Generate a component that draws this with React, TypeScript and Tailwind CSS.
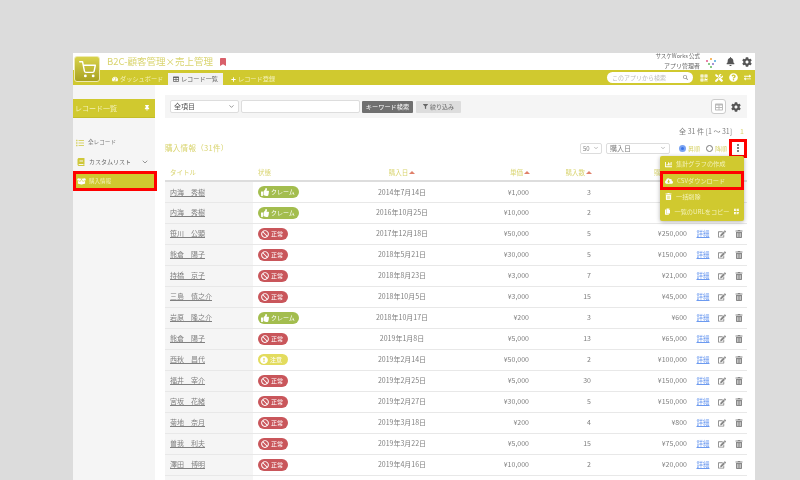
import {
  FaBan,
  FaBell,
  FaBook,
  FaBookmark,
  FaBoxOpen,
  FaChartBar,
  FaCloudDownloadAlt,
  FaCog,
  FaCopy,
  FaEdit,
  FaExchangeAlt,
  FaExclamationCircle,
  FaFilter,
  FaList,
  FaPlus,
  FaQrcode,
  FaQuestionCircle,
  FaSearch,
  FaTable,
  FaTachometerAlt,
  FaThumbsUp,
  FaThumbtack,
  FaTools,
  FaTrashAlt,
} from "react-icons/fa";
import { FiChevronDown, FiShoppingCart } from "react-icons/fi";

type Status = "claim" | "ok" | "warn";

const rows: { name: string; status: Status; date: string; price: string; qty: string; total: string }[] = [
  { name: "内海　秀樹", status: "claim", date: "2014年7月14日", price: "¥1,000", qty: "3", total: "" },
  { name: "内海　秀樹", status: "claim", date: "2016年10月25日", price: "¥10,000", qty: "2", total: "" },
  { name: "笹川　公顕", status: "ok", date: "2017年12月18日", price: "¥50,000", qty: "5", total: "¥250,000" },
  { name: "熊倉　陽子", status: "ok", date: "2018年5月21日", price: "¥30,000", qty: "5", total: "¥150,000" },
  { name: "持橋　京子", status: "ok", date: "2018年8月23日", price: "¥3,000", qty: "7", total: "¥21,000" },
  { name: "三島　慎之介", status: "ok", date: "2018年10月5日", price: "¥3,000", qty: "15", total: "¥45,000" },
  { name: "岩原　隆之介", status: "claim", date: "2018年10月17日", price: "¥200", qty: "3", total: "¥600" },
  { name: "熊倉　陽子", status: "ok", date: "2019年1月8日", price: "¥5,000", qty: "13", total: "¥65,000" },
  { name: "西秋　昌代", status: "warn", date: "2019年2月14日", price: "¥50,000", qty: "2", total: "¥100,000" },
  { name: "福井　宰介", status: "ok", date: "2019年2月25日", price: "¥5,000", qty: "30", total: "¥150,000" },
  { name: "宮坂　花緒", status: "ok", date: "2019年2月27日", price: "¥30,000", qty: "5", total: "¥150,000" },
  { name: "菊地　奈月", status: "ok", date: "2019年3月18日", price: "¥200", qty: "4", total: "¥800" },
  { name: "曽我　利夫", status: "ok", date: "2019年3月22日", price: "¥5,000", qty: "15", total: "¥75,000" },
  { name: "澤田　博明", status: "ok", date: "2019年4月16日", price: "¥10,000", qty: "2", total: "¥20,000" },
];

function Badge({ status }: { status: Status }) {
  if (status === "claim") {
    return (
      <span className="inline-flex h-[12px] w-[41px] items-center gap-[2px] rounded-full bg-[#a3bd4e] pl-[3px] text-[6px] text-white">
        <FaThumbsUp className="text-[8px]" />
        クレーム
      </span>
    );
  }
  if (status === "warn") {
    return (
      <span className="inline-flex h-[11px] w-[30px] items-center gap-[2px] rounded-full bg-[#e3dc5e] pl-[2px] text-[6px] text-white">
        <FaExclamationCircle className="text-[8px]" />
        注意
      </span>
    );
  }
  return (
    <span className="inline-flex h-[12px] w-[30px] items-center gap-[2px] rounded-full bg-[#c9565b] pl-[3px] text-[6px] text-white">
      <FaBan className="text-[8px]" />
      正常
    </span>
  );
}

function SortArrow() {
  return <span className="ml-[1px] inline-block size-0 border-x-[3px] border-b-[3px] border-x-transparent border-b-[#e0806a] align-middle" />;
}

export default function App() {
  return (
    <div className="h-[480px] w-[800px] overflow-hidden bg-[#dcdcdc] pl-[73px] pt-[53px] font-['Noto_Sans_CJK_JP','Noto_Sans',sans-serif] text-[7px] text-[#808080] blur-[0.4px]">
      <div className="relative h-[427px] w-[682px] bg-white">
        {/* Logo */}
        <div className="absolute left-[1px] top-[3px] z-10 flex size-[26px] items-center justify-center rounded-[3px] border border-[#eeeab0] bg-gradient-to-b from-[#d8d24a] to-[#a9a21f]">
          <FiShoppingCart className="text-[17px] text-white" />
        </div>

        {/* Title row */}
        <div className="flex h-[17px] items-center pl-[34px] pr-[3px]">
          <span className="text-[9.5px] leading-none text-[#d9d46f]">B2C-顧客管理×売上管理</span>
          <FaBookmark className="ml-[6px] text-[8px] text-[#d9606a]" />
          <div className="ml-auto -translate-y-[1px] text-right text-[5.5px] leading-[9px] text-[#666]">
            <div>サスケWorks 公式</div>
            <div className="text-[6px]">アプリ管理者</div>
          </div>
          <svg viewBox="0 0 12 12" className="ml-[5px] size-[12px]">
            <circle cx="2" cy="5" r="1" fill="#e05a8a" />
            <circle cx="6" cy="3" r="1" fill="#f0a030" />
            <circle cx="10" cy="5" r="1" fill="#4aa8d8" />
            <circle cx="4" cy="8" r="1" fill="#60b860" />
            <circle cx="8" cy="8" r="1" fill="#8a70c8" />
            <circle cx="6" cy="11" r="1" fill="#60b860" />
          </svg>
          <FaBell className="ml-[9px] text-[9px] text-[#555]" />
          <FaCog className="ml-[7px] text-[10px] text-[#555]" />
        </div>

        {/* Nav bar */}
        <div className="flex h-[15px] items-end bg-[#d0c92f] pl-[39px] pr-[4px] text-[6.2px] text-[#f3f1b8]">
          <div className="flex h-[12px] w-[56px] items-center gap-[2px]">
            <FaTachometerAlt className="text-[6px] text-white" />
            ダッシュボード
          </div>
          <div className="flex h-[12px] w-[55px] items-center justify-center gap-[2px] bg-[#f2f2f2] text-[#666]">
            <FaTable className="text-[6px]" />
            レコード一覧
          </div>
          <div className="ml-[8px] flex h-[12px] items-center gap-[2px]">
            <FaPlus className="text-[5px] text-white" />
            レコード登録
          </div>
          <div className="ml-auto flex h-full items-center">
            <div className="flex h-[11px] w-[86px] items-center justify-between rounded-full bg-white px-[5px] text-[6px] text-[#bbb]">
              このアプリから検索
              <FaSearch className="text-[5px] text-[#999]" />
            </div>
            <FaQrcode className="ml-[7px] text-[8px] text-white" />
            <FaTools className="ml-[7px] text-[8px] text-white" />
            <FaQuestionCircle className="ml-[6px] text-[9px] text-white" />
            <FaExchangeAlt className="ml-[6px] text-[7px] text-white" />
          </div>
        </div>

        <div className="flex">
          {/* Sidebar */}
          <aside className="relative h-[395px] w-[82px] shrink-0 bg-[#f5f5f5] pt-[14px]">
            <div className="flex h-[19px] items-center justify-between border-b border-[#c4bd28] bg-[#d0c92f] pl-[2px] pr-[5px] text-[7px] text-[#f3f1b8]">
              レコード一覧
              <FaThumbtack className="text-[6px] text-white" />
            </div>
            <div className="mt-[15px] flex h-[19px] items-center gap-[4px] pl-[3px] text-[5.6px]">
              <FaList className="text-[8px] text-[#d8d36a]" />
              全レコード
            </div>
            <div className="flex h-[19px] items-center pl-[4px] pr-[6px] text-[6px] text-[#666]">
              <FaBook className="mr-[4px] text-[8px] text-[#cfc83a]" />
              カスタムリスト
              <FiChevronDown className="ml-auto text-[8px]" />
            </div>
            <div className="relative mt-[3px] flex h-[14px] w-[78px] translate-x-[3px] items-center gap-[3px] bg-[#d0c92f] pl-[1px] text-[5.5px] text-[#f3f1b8] outline-[3px] outline-[#ff0000]">
              <FaBoxOpen className="text-[9px] text-white" />
              購入情報
            </div>
          </aside>

          {/* Main */}
          <main className="relative min-w-0 flex-1 pl-[10px] pr-[8px] pt-[10px]">
            <div className="flex h-[23px] items-center bg-[#f5f5f5] px-[5px]">
              <div className="flex h-[13px] w-[69px] items-center justify-between rounded-[2px] border border-[#ddd] bg-white px-[3px] text-[#555]">
                全項目
                <FiChevronDown className="text-[7px]" />
              </div>
              <div className="ml-[2px] h-[13px] w-[119px] rounded-[2px] border border-[#ddd] bg-white" />
              <div className="ml-[2px] flex h-[12px] w-[51px] items-center justify-center rounded-[1px] bg-[#707070] text-[6.2px] text-white">キーワード検索</div>
              <div className="ml-[3px] flex h-[12px] w-[45px] items-center justify-center gap-[2px] rounded-[1px] bg-[#ddd] text-[6px] text-[#666]">
                <FaFilter className="text-[5px]" />
                絞り込み
              </div>
              <div className="ml-auto flex size-[15px] items-center justify-center rounded-[3px] border border-[#ccc] bg-white">
                <FaTable className="text-[8px] text-[#bbb]" />
              </div>
              <FaCog className="ml-[5px] mr-[1px] text-[10px] text-[#555]" />
            </div>

            <div className="mt-[8px] flex h-[10px] items-center justify-end text-[7px]">
              全 31 件 [1 ～ 31]
              <span className="ml-[8px] mr-[3px] text-[#d9d46f]">1</span>
            </div>

            <div className="mt-[3px] flex h-[18px] items-center">
              <span className="text-[7.5px] tracking-[0.3px] text-[#d9d46f]">購入情報（31件）</span>
              <div className="ml-auto flex h-[11px] w-[22px] items-center justify-between rounded-[2px] border border-[#ddd] px-[2px] text-[6px]">
                50
                <FiChevronDown className="text-[6px]" />
              </div>
              <div className="ml-[4px] flex h-[11px] w-[64px] items-center justify-between rounded-[2px] border border-[#ddd] px-[3px] text-[7px]">
                購入日
                <FiChevronDown className="text-[6px]" />
              </div>
              <span className="ml-[9px] size-[7px] rounded-full border-[2px] border-[#7aa3f2] bg-[#3b74e8]" />
              <span className="ml-[2px] text-[6px] text-[#d9d46f]">昇順</span>
              <span className="ml-[6px] size-[7px] rounded-full border border-[#777]" />
              <span className="ml-[2px] text-[6px] text-[#d9d46f]">降順</span>
              <div className="ml-[2px] flex h-[19px] w-[18px] flex-col items-center justify-center gap-[1px] border-[3px] border-[#ff0000] bg-white">
                <span className="size-[2px] rounded-full bg-[#555]" />
                <span className="size-[2px] rounded-full bg-[#555]" />
                <span className="size-[2px] rounded-full bg-[#555]" />
              </div>
            </div>

            {/* Dropdown */}
            <div className="absolute right-[11px] top-[71px] z-10 w-[84px] rounded-[2px] bg-[#d0c92f] py-[1px] text-[6.2px] text-[#f3f1b8] shadow-[0_1px_4px_rgba(0,0,0,0.3)]">
              <div className="flex h-[14px] items-center gap-[4px] pl-[5px]">
                <FaChartBar className="text-[7px] text-white" />
                集計グラフの作成
              </div>
              <div className="flex h-[19px] items-center gap-[4px] border-[3px] border-[#ff0000] pl-[2px]">
                <FaCloudDownloadAlt className="text-[8px] text-white" />
                CSVダウンロード
              </div>
              <div className="flex h-[13px] items-center gap-[4px] pl-[5px]">
                <FaTrashAlt className="text-[7px] text-white" />
                一括削除
              </div>
              <div className="flex h-[17px] items-center gap-[4px] whitespace-nowrap px-[5px]">
                <FaCopy className="text-[7px] text-white" />
                一覧のURLをコピー
                <FaQrcode className="ml-auto text-[7px] text-white" />
              </div>
            </div>

            {/* Table */}
            <table className="mt-[8px] w-[582px] table-fixed border-collapse">
              <colgroup>
                <col className="w-[88px]" />
                <col className="w-[97px]" />
                <col className="w-[104px]" />
                <col className="w-[80px]" />
                <col className="w-[62px]" />
                <col className="w-[96px]" />
                <col className="w-[22px]" />
                <col className="w-[16px]" />
                <col className="w-[17px]" />
              </colgroup>
              <thead>
                <tr className="h-[16px] border-b-2 border-[#ddd] text-[6.5px] text-[#d9d46f]">
                  <th className="pl-[5px] text-left font-normal">タイトル</th>
                  <th className="pl-[5px] text-left font-normal">状態</th>
                  <th className="text-center font-normal">購入日<SortArrow /></th>
                  <th className="pr-[4px] text-right font-normal">単価<SortArrow /></th>
                  <th className="pr-[4px] text-right font-normal">購入数<SortArrow /></th>
                  <th className="pr-[5px] text-right font-normal">購入金額<SortArrow /></th>
                  <th colSpan={3} />
                </tr>
              </thead>
              <tbody>
                {rows.map((row, i) => (
                  <tr key={i} className="h-[21px] border-b border-[#e8e8e8] text-[7px]">
                    <td className="bg-[#f5f5f5] pl-[5px]">
                      <span className="text-[#808080] underline">{row.name}</span>
                    </td>
                    <td className="pl-[5px] leading-none">
                      <Badge status={row.status} />
                    </td>
                    <td className="text-center">{row.date}</td>
                    <td className="pr-[5px] text-right">{row.price}</td>
                    <td className="pr-[5px] text-right">{row.qty}</td>
                    <td className="pr-[5px] text-right">{row.total}</td>
                    {i > 1 ? (
                      <>
                        <td className="text-center text-[6.5px] text-[#6c9af0] underline">詳細</td>
                        <td>
                          <FaEdit className="mx-auto text-[8px] text-[#888]" />
                        </td>
                        <td>
                          <FaTrashAlt className="mx-auto text-[8px] text-[#888]" />
                        </td>
                      </>
                    ) : (
                      <td colSpan={3} />
                    )}
                  </tr>
                ))}
                <tr className="h-[21px]">
                  <td className="bg-[#f5f5f5]" />
                  <td colSpan={8} />
                </tr>
              </tbody>
            </table>
          </main>
        </div>
      </div>
    </div>
  );
}
